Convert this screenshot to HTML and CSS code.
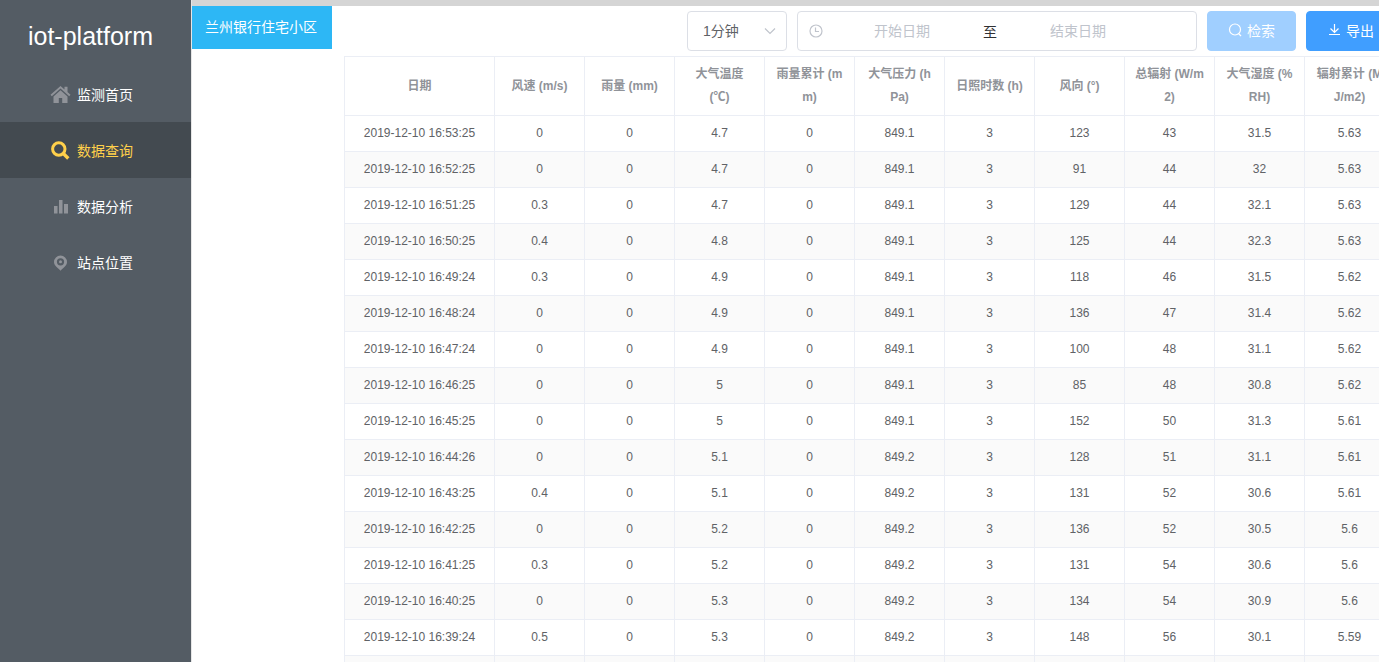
FILE: index.html
```
<!DOCTYPE html>
<html lang="zh-CN">
<head>
    <meta charset="UTF-8">
    <meta name="viewport" content="width=device-width, initial-scale=1.0">
    <title>iot-platform</title>
    <link rel="stylesheet" href="styles.css">
</head>
<body>
    <aside class="sidebar">
        <h1 class="logo">iot-platform</h1>
        <nav class="menu">
            <a href="#home" class="menu-item">
                <svg class="menu-icon" viewBox="0 0 24 24"><path d="M12.500 4 2.500 12.800l1.300 1.400 8.700-7.600 8.700 7.600 1.300-1.400-3-2.700V4.800h-3v2.700z"/><path d="m12.500 8.200-7 6.200V21h5.300v-5h3.400v5h5.300v-6.600z"/></svg>
                <span>监测首页</span>
            </a>
            <a href="#query" class="menu-item active">
                <svg class="menu-icon" viewBox="0 0 24 24"><circle cx="10.800" cy="11" r="6.200" fill="none" stroke="currentColor" stroke-width="3"/><path d="m15.300 15.500 5 5" stroke="currentColor" stroke-width="3.400" stroke-linecap="butt"/></svg>
                <span>数据查询</span>
            </a>
            <a href="#analysis" class="menu-item">
                <svg class="menu-icon" viewBox="0 0 24 24"><path d="M6 12h3.500v7.500H6zM11 6h3.500v13.500H11zM16 10h4v9.500h-4z"/></svg>
                <span>数据分析</span>
            </a>
            <a href="#location" class="menu-item">
                <svg class="menu-icon" viewBox="0 0 24 24"><path fill-rule="evenodd" d="M12.500 5.500A6.500 6.500 0 0 0 6 12c0 3.500 3.500 5.500 6.500 8.700 3-3.200 6.500-5.200 6.500-8.700a6.500 6.500 0 0 0-6.500-6.500zm0 2.700a3.600 3.600 0 1 1 0 7.200 3.600 3.600 0 0 1 0-7.200z"/><circle cx="12.500" cy="11.800" r="1.500"/></svg>
                <span>站点位置</span>
            </a>
        </nav>
    </aside>

    <main class="main">
        <div class="station-list">
            <button type="button" class="station">兰州银行住宅小区</button>
        </div>

        <section class="content">
            <form class="toolbar">
                <div class="select-wrap">
                    <select class="interval" aria-label="时间间隔">
                        <option>1分钟</option>
                    </select>
                    <svg class="arrow" viewBox="0 0 14 14"><path d="m2 4.500 5 5 5-5"/></svg>
                </div>
                <div class="date-range">
                    <svg class="line-icon" viewBox="0 0 14 14"><circle cx="7" cy="7" r="6"/><path d="M6.500 3.500v4h3.500"/></svg>
                    <input type="text" placeholder="开始日期" aria-label="开始日期">
                    <span class="range-sep">至</span>
                    <input type="text" placeholder="结束日期" aria-label="结束日期">
                </div>
                <button type="button" class="btn" disabled>
                    <svg class="line-icon" viewBox="0 0 14 14"><circle cx="7" cy="6.500" r="5.500"/><path d="m10.500 10.500 2.500 2.500"/></svg>
                    <span>检索</span>
                </button>
                <button type="button" class="btn">
                    <svg class="line-icon" viewBox="0 0 14 14"><path d="M7.500 1v8M3.500 5.500l4 4 4-4M2 11.500h11"/></svg>
                    <span>导出</span>
                </button>
            </form>

            <table class="data-table">
                <colgroup>
                    <col class="col-date">
                    <col span="10">
                </colgroup>
                <thead>
                    <tr>
                        <th>日期</th>
                        <th>风速 (m/s)</th>
                        <th>雨量 (mm)</th>
                        <th>大气温度 (℃)</th>
                        <th>雨量累计 (mm)</th>
                        <th>大气压力 (hPa)</th>
                        <th>日照时数 (h)</th>
                        <th>风向 (°)</th>
                        <th>总辐射 (W/m2)</th>
                        <th>大气湿度 (%RH)</th>
                        <th>辐射累计 (MJ/m2)</th>
                    </tr>
                </thead>
                <tbody>
                    <tr><td>2019-12-10 16:53:25</td><td>0</td><td>0</td><td>4.7</td><td>0</td><td>849.1</td><td>3</td><td>123</td><td>43</td><td>31.5</td><td>5.63</td></tr>
                    <tr><td>2019-12-10 16:52:25</td><td>0</td><td>0</td><td>4.7</td><td>0</td><td>849.1</td><td>3</td><td>91</td><td>44</td><td>32</td><td>5.63</td></tr>
                    <tr><td>2019-12-10 16:51:25</td><td>0.3</td><td>0</td><td>4.7</td><td>0</td><td>849.1</td><td>3</td><td>129</td><td>44</td><td>32.1</td><td>5.63</td></tr>
                    <tr><td>2019-12-10 16:50:25</td><td>0.4</td><td>0</td><td>4.8</td><td>0</td><td>849.1</td><td>3</td><td>125</td><td>44</td><td>32.3</td><td>5.63</td></tr>
                    <tr><td>2019-12-10 16:49:24</td><td>0.3</td><td>0</td><td>4.9</td><td>0</td><td>849.1</td><td>3</td><td>118</td><td>46</td><td>31.5</td><td>5.62</td></tr>
                    <tr><td>2019-12-10 16:48:24</td><td>0</td><td>0</td><td>4.9</td><td>0</td><td>849.1</td><td>3</td><td>136</td><td>47</td><td>31.4</td><td>5.62</td></tr>
                    <tr><td>2019-12-10 16:47:24</td><td>0</td><td>0</td><td>4.9</td><td>0</td><td>849.1</td><td>3</td><td>100</td><td>48</td><td>31.1</td><td>5.62</td></tr>
                    <tr><td>2019-12-10 16:46:25</td><td>0</td><td>0</td><td>5</td><td>0</td><td>849.1</td><td>3</td><td>85</td><td>48</td><td>30.8</td><td>5.62</td></tr>
                    <tr><td>2019-12-10 16:45:25</td><td>0</td><td>0</td><td>5</td><td>0</td><td>849.1</td><td>3</td><td>152</td><td>50</td><td>31.3</td><td>5.61</td></tr>
                    <tr><td>2019-12-10 16:44:26</td><td>0</td><td>0</td><td>5.1</td><td>0</td><td>849.2</td><td>3</td><td>128</td><td>51</td><td>31.1</td><td>5.61</td></tr>
                    <tr><td>2019-12-10 16:43:25</td><td>0.4</td><td>0</td><td>5.1</td><td>0</td><td>849.2</td><td>3</td><td>131</td><td>52</td><td>30.6</td><td>5.61</td></tr>
                    <tr><td>2019-12-10 16:42:25</td><td>0</td><td>0</td><td>5.2</td><td>0</td><td>849.2</td><td>3</td><td>136</td><td>52</td><td>30.5</td><td>5.6</td></tr>
                    <tr><td>2019-12-10 16:41:25</td><td>0.3</td><td>0</td><td>5.2</td><td>0</td><td>849.2</td><td>3</td><td>131</td><td>54</td><td>30.6</td><td>5.6</td></tr>
                    <tr><td>2019-12-10 16:40:25</td><td>0</td><td>0</td><td>5.3</td><td>0</td><td>849.2</td><td>3</td><td>134</td><td>54</td><td>30.9</td><td>5.6</td></tr>
                    <tr><td>2019-12-10 16:39:24</td><td>0.5</td><td>0</td><td>5.3</td><td>0</td><td>849.2</td><td>3</td><td>148</td><td>56</td><td>30.1</td><td>5.59</td></tr>
                    <tr><td>&nbsp;</td><td></td><td></td><td></td><td></td><td></td><td></td><td></td><td></td><td></td><td></td></tr>
                </tbody>
            </table>
        </section>
    </main>
</body>
</html>
```
FILE: styles.css
```
* {
    box-sizing: border-box;
}

body {
    margin: 0;
    height: 100vh;
    display: flex;
    overflow: hidden;
    font-family: "Liberation Sans", "Noto Sans CJK SC", sans-serif;
    font-size: 14px;
    color: #303133;
    background-color: #fff;
}

button,
input,
select {
    font-family: inherit;
    font-size: 14px;
}

/* Боковое меню */
.sidebar {
    flex: 0 0 192px;
    background-color: #545c64;
    border-right: 1px solid #e6e6e6;
}

.logo {
    margin: 0;
    padding: 8px 10px 0 0;
    height: 66px;
    line-height: 56px;
    font-size: 25px;
    font-weight: normal;
    text-align: center;
    color: #fff;
}

.menu-item {
    display: flex;
    align-items: center;
    gap: 5px;
    height: 56px;
    padding-left: 48px;
    color: #fff;
    text-decoration: none;
}

.menu-item.active {
    background-color: #434a50;
    color: #ffd04b;
}

.menu-icon {
    width: 24px;
    height: 24px;
    color: #909399;
    fill: currentColor;
}

.active .menu-icon {
    color: #ffd04b;
}

/* Основная область */
.main {
    flex: 1;
    min-width: 0;
    display: flex;
    gap: 12px;
    overflow: hidden;
    border-top: 6px solid #d5d5d5;
}

.station-list {
    flex: 0 0 140px;
}

.station {
    width: 100%;
    height: 43px;
    padding: 0 2px 4px 0;
    border: 0;
    background-color: #2db7f5;
    color: #fff;
}

.content {
    flex: 1 0 1051px;
}

.toolbar {
    display: flex;
    justify-content: flex-end;
    gap: 10px;
    padding: 5px 0;
}

.select-wrap {
    position: relative;
    width: 100px;
}

.interval {
    appearance: none;
    width: 100%;
    height: 40px;
    padding: 0 30px 0 15px;
    border: 1px solid #dcdfe6;
    border-radius: 4px;
    background-color: #fff;
    color: #606266;
}

.arrow {
    position: absolute;
    top: 13px;
    right: 10px;
    width: 14px;
    height: 14px;
    fill: none;
    stroke: #c0c4cc;
    stroke-width: 1.2;
    pointer-events: none;
}

.date-range {
    display: flex;
    align-items: center;
    width: 400px;
    height: 40px;
    padding: 0 40px 0 10px;
    border: 1px solid #dcdfe6;
    border-radius: 4px;
    color: #c0c4cc;
}

.date-range input {
    flex: 1;
    min-width: 0;
    padding: 0;
    border: 0;
    outline: none;
    text-align: center;
    color: #606266;
}

.date-range input::placeholder {
    color: #c0c4cc;
}

.range-sep {
    width: 20px;
    text-align: center;
    color: #303133;
}

.line-icon {
    flex: none;
    width: 14px;
    height: 14px;
    fill: none;
    stroke: currentColor;
    stroke-width: 1.2;
}

.date-range .line-icon {
    margin: 0 1px;
}

.btn {
    display: flex;
    align-items: center;
    gap: 5px;
    height: 40px;
    padding: 0 20px 2px;
    border: 1px solid #409eff;
    border-radius: 4px;
    background-color: #409eff;
    color: #fff;
}

.btn:disabled {
    border-color: #a0cfff;
    background-color: #a0cfff;
}

/* Таблица */
.data-table {
    width: 100%;
    table-layout: fixed;
    border-collapse: separate;
    border-spacing: 0;
    border-top: 1px solid #ebeef5;
    border-left: 1px solid #ebeef5;
    font-size: 12px;
    line-height: 23px;
    text-align: center;
    color: #606266;
}

.col-date {
    width: 150px;
}

.data-table th,
.data-table td {
    padding: 6px 10px;
    border-right: 1px solid #ebeef5;
    border-bottom: 1px solid #ebeef5;
    word-break: break-all;
}

.data-table th {
    color: #909399;
}

.data-table tbody tr:nth-child(even) {
    background-color: #fafafa;
}
```
